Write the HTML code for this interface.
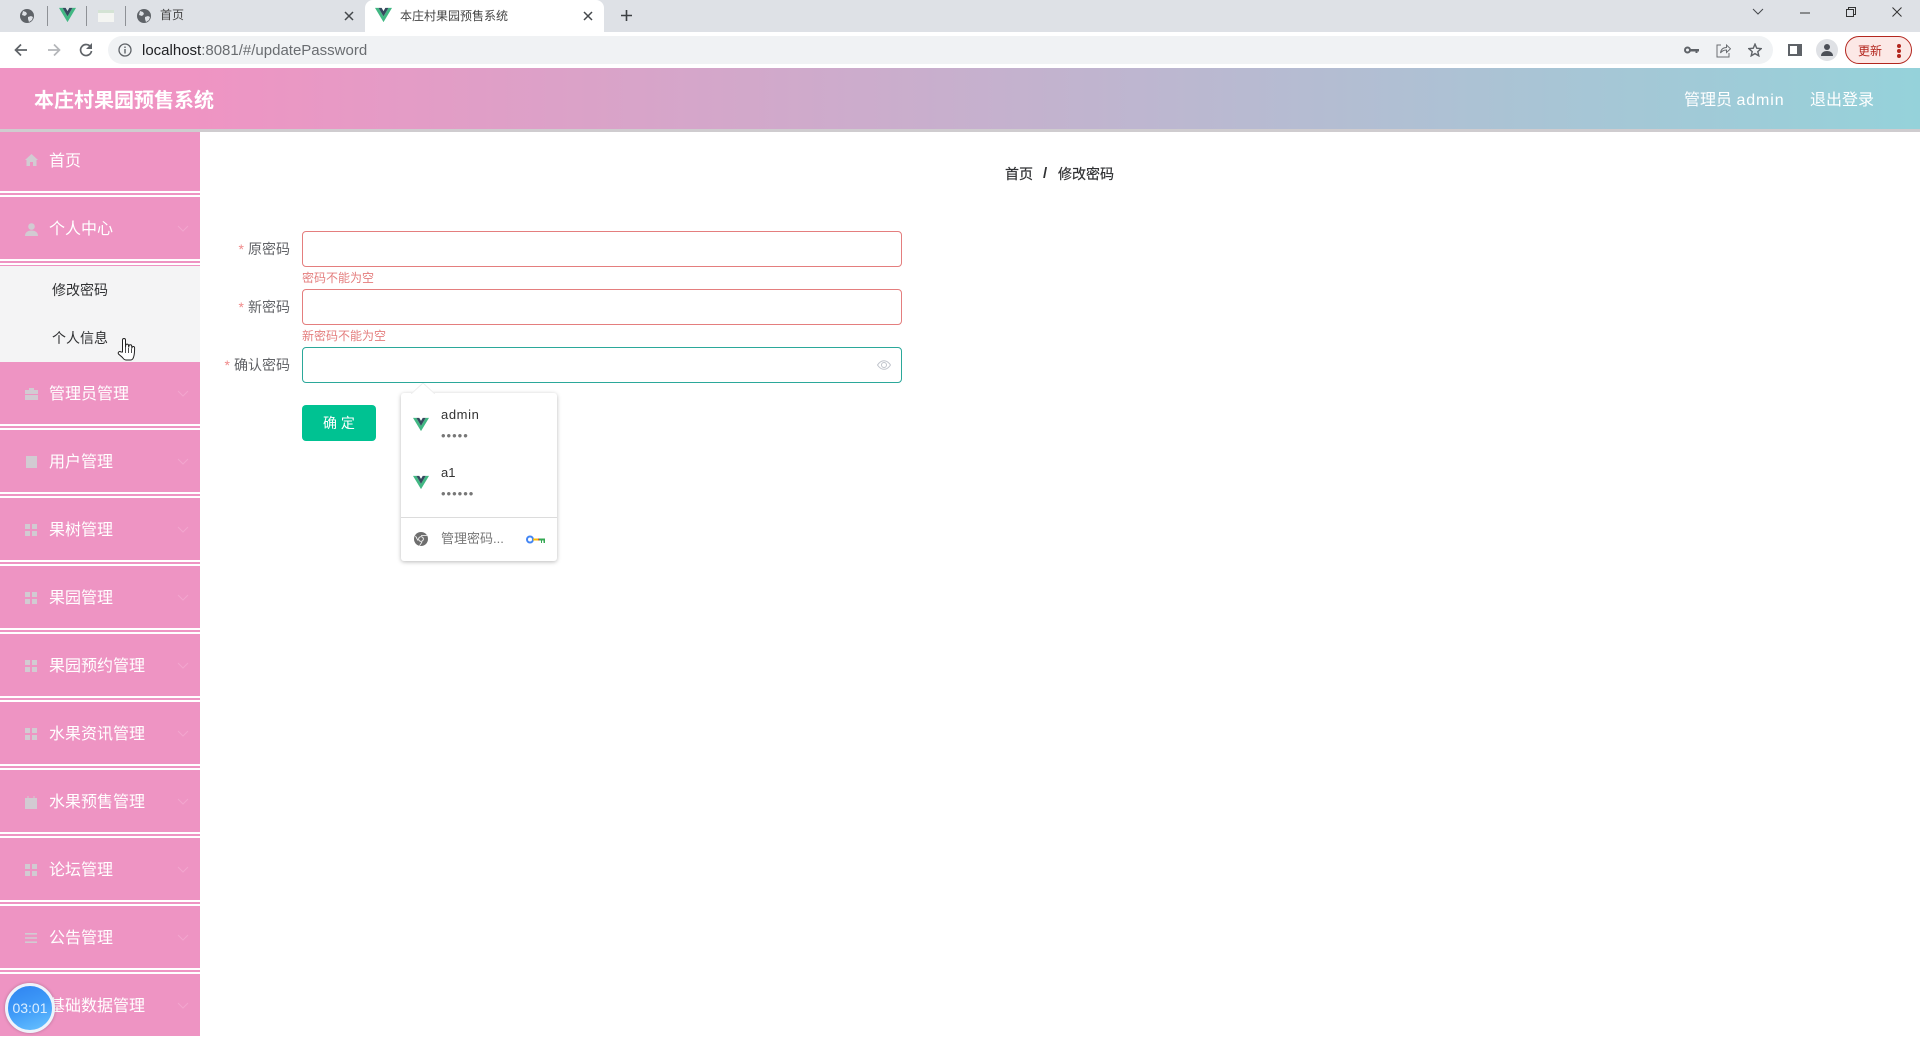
<!DOCTYPE html>
<html lang="zh"><head><meta charset="utf-8"><title>本庄村果园预售系统</title>
<style>
*{box-sizing:border-box}
html,body{margin:0;padding:0;width:1920px;height:1038px;overflow:hidden;background:#fff;font-family:"Liberation Sans","Noto Sans CJK SC",sans-serif}
.a{position:absolute;white-space:nowrap}
svg{position:absolute;display:block}
.t{position:absolute;white-space:nowrap;line-height:20px;height:20px}
.sep{position:absolute;top:6px;width:1px;height:20px;background:#8e9196}
.item{position:absolute;left:0;width:200px;height:68px;background:linear-gradient(#ee94c3 0 62px,#fff 62px 64px,#ee94c3 64px 66px,#fff 66px 68px)}
.item .l{position:absolute;left:49px;top:23px;font-size:16px;line-height:20px;color:#fff;white-space:nowrap}
.item svg.i{left:25px;top:26px}
.item svg.c{left:177px;top:28px}
.inp{position:absolute;left:302px;width:600px;height:36px;border:1px solid #e47e7e;border-radius:4px;background:#fff}
.lab{position:absolute;width:290px;left:0;text-align:right;font-size:14px;line-height:20px;color:#606266}
.lab b{font-weight:400;color:#f08a8a;margin-right:4px}
.err{position:absolute;left:302px;font-size:12px;line-height:14px;color:#e47e7e}
</style></head><body>

<!-- tab strip -->
<div class="a" style="left:0;top:0;width:1920px;height:32px;background:#dee1e6"></div>
<svg style="left:20px;top:9px" width="14" height="14" viewBox="0 0 14 14"><circle cx="7" cy="7" r="7" fill="#5f6368"/><path d="M3 2l3 1 1 2-2 2-3-1zM8 8l3-1 2 1-1 3-3 2-1-3z" fill="#dee1e6"/></svg>
<div class="sep" style="left:47px"></div>
<svg style="left:59px;top:7px" width="17" height="16" viewBox="0 0 24 22"><path d="M0 1L12 21 24 1h-5L12 13 5 1z" fill="#41b883"/><path d="M5 1l7 12 7-12h-4.400L12 5.600 9.400 1z" fill="#35495e"/></svg>
<div class="sep" style="left:86px"></div>
<div class="a" style="left:98px;top:10px;width:16px;height:12px;background:#f4f5f2;border-top:3px solid #d4e3d4"></div>
<div class="sep" style="left:125px"></div>
<svg style="left:137px;top:9px" width="14" height="14" viewBox="0 0 14 14"><circle cx="7" cy="7" r="7" fill="#5f6368"/><path d="M3 2l3 1 1 2-2 2-3-1zM8 8l3-1 2 1-1 3-3 2-1-3z" fill="#dee1e6"/></svg>
<div class="t" style="left:160px;top:5px;font-size:12px;color:#444">首页</div>
<svg style="left:344px;top:11px" width="10" height="10" viewBox="0 0 10 10"><path d="M1 1l8 8M9 1L1 9" stroke="#45484c" stroke-width="1.500"/></svg>
<div class="a" style="left:365px;top:0;width:239px;height:33px;background:#fff;border-radius:8px 8px 0 0"></div>
<svg style="left:375px;top:7px" width="17" height="16" viewBox="0 0 24 22"><path d="M0 1L12 21 24 1h-5L12 13 5 1z" fill="#41b883"/><path d="M5 1l7 12 7-12h-4.400L12 5.600 9.400 1z" fill="#35495e"/></svg>
<div class="t" style="left:400px;top:6px;font-size:12px;color:#444">本庄村果园预售系统</div>
<svg style="left:583px;top:11px" width="10" height="10" viewBox="0 0 10 10"><path d="M1 1l8 8M9 1L1 9" stroke="#45484c" stroke-width="1.500"/></svg>
<svg style="left:620px;top:9px" width="13" height="13" viewBox="0 0 13 13"><path d="M6.500 1v11M1 6.500h11" stroke="#3c4043" stroke-width="1.600"/></svg>
<svg style="left:1752px;top:8px" width="12" height="8" viewBox="0 0 12 8"><path d="M1 1l5 5 5-5" fill="none" stroke="#45484c" stroke-width="1"/></svg>
<svg style="left:1800px;top:12px" width="10" height="2" viewBox="0 0 10 2"><path d="M0 1h10" stroke="#333" stroke-width="1"/></svg>
<svg style="left:1846px;top:7px" width="10" height="10" viewBox="0 0 10 10"><path d="M.5 2.500h7v7h-7zM2.500 2.500v-2h7v7h-2" fill="none" stroke="#333" stroke-width="1"/></svg>
<svg style="left:1892px;top:7px" width="10" height="10" viewBox="0 0 10 10"><path d="M.5.5l9 9M9.500.5l-9 9" stroke="#333" stroke-width="1"/></svg>

<!-- toolbar -->
<div class="a" style="left:0;top:32px;width:1920px;height:36px;background:#fff"></div>
<svg style="left:14px;top:43px" width="14" height="14" viewBox="0 0 14 14"><path d="M13 7H2M7 1.500L1.500 7 7 12.500" fill="none" stroke="#5f6368" stroke-width="1.700"/></svg>
<svg style="left:47px;top:43px" width="14" height="14" viewBox="0 0 14 14"><path d="M1 7h11M7 1.500L12.500 7 7 12.500" fill="none" stroke="#b4b6b9" stroke-width="1.700"/></svg>
<svg style="left:79px;top:43px" width="14" height="14" viewBox="0 0 14 14"><path d="M11.800 4.200A5.500 5.500 0 1 0 12.500 8" fill="none" stroke="#5f6368" stroke-width="1.700"/><path d="M13 0v6H7z" fill="#5f6368"/></svg>
<div class="a" style="left:108px;top:36px;width:1665px;height:28px;background:#f0f2f4;border-radius:14px"></div>
<svg style="left:118px;top:43px" width="14" height="14" viewBox="0 0 14 14"><circle cx="7" cy="7" r="6" fill="none" stroke="#5f6368" stroke-width="1.300"/><path d="M7 6v4.500M7 3.500v1.500" stroke="#5f6368" stroke-width="1.400"/></svg>
<div class="t" style="left:142px;top:41px;font-size:15px;color:#6a6d71"><span style="color:#202124">localhost</span>:8081/#/updatePassword</div>
<svg style="left:1684px;top:46px" width="15" height="8" viewBox="0 0 15 8"><circle cx="3.500" cy="4" r="2.500" fill="none" stroke="#5f6368" stroke-width="2"/><path d="M6 3h9v2.500h-1.500V7h-2V5.500H6z" fill="#5f6368"/></svg>
<svg style="left:1716px;top:43px" width="15" height="15" viewBox="0 0 15 15"><path d="M5 2H1v12h12v-4" fill="none" stroke="#6b6e72" stroke-width="1"/><path d="M4.500 10c.5-4 3-5.500 6-5.500V2l4 3.800-4 3.700V7c-2.500 0-4.500.8-6 3z" fill="none" stroke="#6b6e72" stroke-width="1"/></svg>
<svg style="left:1748px;top:43px" width="14" height="14" viewBox="0 0 24 24"><path d="M12 2l3 7 7.500.7-5.700 5 1.700 7.300L12 18.200 5.500 22l1.700-7.300-5.700-5L9 9z" fill="none" stroke="#5f6368" stroke-width="2.400"/></svg>
<svg style="left:1788px;top:43px" width="14" height="14" viewBox="0 0 14 14"><path d="M0 1h14v12H0z" fill="#5f6368"/><path d="M2 3h7v8H2z" fill="#fff"/></svg>
<div class="a" style="left:1816px;top:39px;width:22px;height:22px;border-radius:50%;background:#dfe1e5"></div>
<svg style="left:1820px;top:43px" width="14" height="14" viewBox="0 0 14 14"><circle cx="7" cy="4" r="3" fill="#4b4f57"/><path d="M1 13c0-3.500 3-5 6-5s6 1.500 6 5z" fill="#4b4f57"/></svg>
<div class="a" style="left:1845px;top:36px;width:67px;height:28px;border-radius:14px;background:#fce8e6;border:1px solid #b3261e"></div>
<div class="t" style="left:1858px;top:41px;font-size:12px;color:#b3261e">更新</div>
<div class="a" style="left:1897px;top:44px;width:4px;height:4px;border-radius:50%;background:#b3261e;box-shadow:0 5px 0 #b3261e,0 10px 0 #b3261e"></div>

<!-- page header -->
<div class="a" style="left:0;top:68px;width:1920px;height:61px;background:linear-gradient(90deg,#ef94c3 10%,#95d2da 100%)"></div>
<div class="a" style="left:34px;top:89px;font-size:20px;line-height:24px;font-weight:700;color:#fff">本庄村果园预售系统</div>
<div class="a" style="left:1684px;top:91px;font-size:16px;line-height:20px;color:#fff">管理员 <span style="letter-spacing:.9px">admin</span></div>
<div class="a" style="left:1810px;top:91px;font-size:16px;line-height:20px;color:#fff">退出登录</div>

<!-- sidebar -->
<div class="item" style="top:129px"><div class="l">首页</div>
<svg class="i" style="top:25px" width="13" height="12" viewBox="0 0 13 12"><path d="M6.500 0L13 6h-1.500v6H8V8H5v4H1.500V6H0z" fill="#d2cbd2"/></svg></div>
<div class="item" style="top:197px"><div class="l">个人中心</div>
<svg class="i" width="13" height="13" viewBox="0 0 13 13"><circle cx="6.500" cy="3.500" r="3.300" fill="#d2cbd2"/><path d="M0 13c0-3.500 2.500-5.500 6.500-5.500S13 9.500 13 13z" fill="#d2cbd2"/></svg>
<svg class="c" width="12" height="7" viewBox="0 0 12 7"><path d="M1 1l5 5 5-5" fill="none" stroke="#f2a6ce" stroke-width="1"/></svg></div>
<div class="a" style="left:0;top:265px;width:200px;height:1px;background:#ee94c3"></div>
<div class="a" style="left:0;top:266px;width:200px;height:96px;background:#f4f4f5"></div>
<div class="a" style="left:52px;top:280px;font-size:14px;line-height:20px;color:#303133">修改密码</div>
<div class="a" style="left:52px;top:328px;font-size:14px;line-height:20px;color:#303133">个人信息</div>
<div class="item" style="top:362px"><div class="l">管理员管理</div>
<svg class="i" width="13" height="12" viewBox="0 0 13 12"><path d="M4 2V0h5v2h4v4H0V2zM0 7h13v5H0z" fill="#d2cbd2"/></svg>
<svg class="c" width="12" height="7" viewBox="0 0 12 7"><path d="M1 1l5 5 5-5" fill="none" stroke="#f2a6ce" stroke-width="1"/></svg></div>
<div class="item" style="top:430px"><div class="l">用户管理</div>
<svg class="i" width="13" height="12" viewBox="0 0 13 12"><path d="M1 0h11v12H1z" fill="#d2cbd2"/></svg>
<svg class="c" width="12" height="7" viewBox="0 0 12 7"><path d="M1 1l5 5 5-5" fill="none" stroke="#f2a6ce" stroke-width="1"/></svg></div>
<div class="item" style="top:498px"><div class="l">果树管理</div>
<svg class="i" width="12" height="12" viewBox="0 0 12 12"><path d="M0 0h5v5H0zM7 0h5v5H7zM0 7h5v5H0zM7 7h5v5H7z" fill="#d2cbd2"/></svg>
<svg class="c" width="12" height="7" viewBox="0 0 12 7"><path d="M1 1l5 5 5-5" fill="none" stroke="#f2a6ce" stroke-width="1"/></svg></div>
<div class="item" style="top:566px"><div class="l">果园管理</div>
<svg class="i" width="12" height="12" viewBox="0 0 12 12"><path d="M0 0h5v5H0zM7 0h5v5H7zM0 7h5v5H0zM7 7h5v5H7z" fill="#d2cbd2"/></svg>
<svg class="c" width="12" height="7" viewBox="0 0 12 7"><path d="M1 1l5 5 5-5" fill="none" stroke="#f2a6ce" stroke-width="1"/></svg></div>
<div class="item" style="top:634px"><div class="l">果园预约管理</div>
<svg class="i" width="12" height="12" viewBox="0 0 12 12"><path d="M0 0h5v5H0zM7 0h5v5H7zM0 7h5v5H0zM7 7h5v5H7z" fill="#d2cbd2"/></svg>
<svg class="c" width="12" height="7" viewBox="0 0 12 7"><path d="M1 1l5 5 5-5" fill="none" stroke="#f2a6ce" stroke-width="1"/></svg></div>
<div class="item" style="top:702px"><div class="l">水果资讯管理</div>
<svg class="i" width="12" height="12" viewBox="0 0 12 12"><path d="M0 0h5v5H0zM7 0h5v5H7zM0 7h5v5H0zM7 7h5v5H7z" fill="#d2cbd2"/></svg>
<svg class="c" width="12" height="7" viewBox="0 0 12 7"><path d="M1 1l5 5 5-5" fill="none" stroke="#f2a6ce" stroke-width="1"/></svg></div>
<div class="item" style="top:770px"><div class="l">水果预售管理</div>
<svg class="i" width="12" height="13" viewBox="0 0 12 13"><path d="M0 2h2.500V0h1v2h5V0h1v2H12v11H0z" fill="#d2cbd2"/></svg>
<svg class="c" width="12" height="7" viewBox="0 0 12 7"><path d="M1 1l5 5 5-5" fill="none" stroke="#f2a6ce" stroke-width="1"/></svg></div>
<div class="item" style="top:838px"><div class="l">论坛管理</div>
<svg class="i" width="12" height="12" viewBox="0 0 12 12"><path d="M0 0h5v5H0zM7 0h5v5H7zM0 7h5v5H0zM7 7h5v5H7z" fill="#d2cbd2"/></svg>
<svg class="c" width="12" height="7" viewBox="0 0 12 7"><path d="M1 1l5 5 5-5" fill="none" stroke="#f2a6ce" stroke-width="1"/></svg></div>
<div class="item" style="top:906px"><div class="l">公告管理</div>
<svg class="i" width="12" height="12" viewBox="0 0 12 12"><path d="M0 1h12v1.600H0zM0 5.200h12v1.600H0zM0 9.400h12V11H0z" fill="#d2cbd2"/></svg>
<svg class="c" width="12" height="7" viewBox="0 0 12 7"><path d="M1 1l5 5 5-5" fill="none" stroke="#f2a6ce" stroke-width="1"/></svg></div>
<div class="item" style="top:974px;height:62px"><div class="l">基础数据管理</div>
<svg class="c" width="12" height="7" viewBox="0 0 12 7"><path d="M1 1l5 5 5-5" fill="none" stroke="#f2a6ce" stroke-width="1"/></svg></div>
<div class="a" style="left:0;top:129px;width:1920px;height:3px;background:#cfcccf"></div>

<!-- breadcrumb -->
<div class="a" style="left:1005px;top:164px;font-size:14px;line-height:20px;color:#303133;-webkit-text-stroke:.2px #303133">首页</div>
<div class="a" style="left:1043px;top:164px;font-size:15px;line-height:20px;color:#303133;font-weight:700">/</div>
<div class="a" style="left:1058px;top:164px;font-size:14px;line-height:20px;color:#303133;-webkit-text-stroke:.2px #303133">修改密码</div>

<!-- form -->
<div class="lab" style="top:239px"><b>*</b>原密码</div>
<div class="inp" style="top:231px"></div>
<div class="err" style="top:271px">密码不能为空</div>
<div class="lab" style="top:297px"><b>*</b>新密码</div>
<div class="inp" style="top:289px"></div>
<div class="err" style="top:329px">新密码不能为空</div>
<div class="lab" style="top:355px"><b>*</b>确认密码</div>
<div class="inp" style="top:347px;border-color:#2ba89a"></div>
<svg style="left:877px;top:360px" width="14" height="10" viewBox="0 0 14 10"><path d="M.5 5C2.500 2 4.500.7 7 .7S11.500 2 13.500 5C11.500 8 9.500 9.300 7 9.300S2.500 8 .5 5z" fill="none" stroke="#c0c4cc" stroke-width="1"/><circle cx="7" cy="5" r="2.500" fill="none" stroke="#c0c4cc" stroke-width="1"/></svg>
<div class="a" style="left:302px;top:405px;width:74px;height:36px;border-radius:4px;background:#00c292;color:#fff;font-size:14px;line-height:36px;text-align:center">确 定</div>

<!-- password popup -->
<svg style="left:411px;top:383px;z-index:2" width="24" height="11" viewBox="0 0 24 11"><path d="M0 11L12 0l12 11z" fill="#fff"/><path d="M0 11L12 0l12 11" fill="none" stroke="#eee" stroke-width="1"/></svg>
<div class="a" style="left:401px;top:393px;width:156px;height:168px;background:#fff;border-radius:3px;box-shadow:0 1px 4px rgba(0,0,0,.28)"></div>
<svg style="left:413px;top:417px" width="16" height="15" viewBox="0 0 24 22"><path d="M0 1L12 21 24 1h-5L12 13 5 1z" fill="#41b883"/><path d="M5 1l7 12 7-12h-4.400L12 5.600 9.400 1z" fill="#35495e"/></svg>
<div class="a" style="left:441px;top:405px;font-size:13px;line-height:20px;letter-spacing:.6px;color:#333">admin</div>
<div class="a" style="left:441px;top:426px;font-size:13px;line-height:20px;letter-spacing:1px;color:#777">•••••</div>
<svg style="left:413px;top:475px" width="16" height="15" viewBox="0 0 24 22"><path d="M0 1L12 21 24 1h-5L12 13 5 1z" fill="#41b883"/><path d="M5 1l7 12 7-12h-4.400L12 5.600 9.400 1z" fill="#35495e"/></svg>
<div class="a" style="left:441px;top:463px;font-size:13px;line-height:20px;color:#333">a1</div>
<div class="a" style="left:441px;top:484px;font-size:13px;line-height:20px;letter-spacing:1px;color:#777">••••••</div>
<div class="a" style="left:401px;top:517px;width:156px;height:1px;background:#dcdcdc"></div>
<svg style="left:414px;top:532px" width="14" height="14" viewBox="0 0 14 14"><circle cx="7" cy="7" r="7" fill="#6e6e6e"/><circle cx="7" cy="7" r="2.800" fill="#fff"/><circle cx="7" cy="7" r="1.900" fill="#6e6e6e"/><path d="M7 3.500h6M4 8.500L1.500 4M8 10l-2.500 3.700" stroke="#fff" stroke-width=".8"/></svg>
<div class="a" style="left:441px;top:529px;font-size:13px;line-height:20px;color:#777">管理密码...</div>
<svg style="left:526px;top:535px" width="19" height="9" viewBox="0 0 19 9"><circle cx="4" cy="4.500" r="3" fill="none" stroke="#4285f4" stroke-width="2"/><path d="M7 3.500h5v2H7z" fill="#fbbc05"/><path d="M12 3.500h3v2h-3z" fill="#ea4335"/><path d="M13 3.500h6V8h-1.500V5.500H16V8h-1V5.500h-2z" fill="#34a853"/></svg>

<!-- hand cursor -->
<svg style="left:117px;top:337px" width="19" height="26" viewBox="0 0 19 26"><path d="M5.500 15V3a1.500 1.500 0 0 1 3 0v7l.2-1.500a1.400 1.400 0 0 1 2.800 0l.2 2 .2-1.400a1.400 1.400 0 0 1 2.800.2l.2 2 .2-.9c.3-1.400 2.500-1.200 2.500.5 0 4.500-.2 7-1 9.100-.5 1.800-1.500 3-3 3H9c-1.500 0-2.500-1-3.500-2.500L1.500 17c-1-1.800 1-3.300 2.500-2z" fill="#fff" stroke="#222" stroke-width="1"/><path d="M8.500 10v6M11.500 11v5M14.500 11.500V16" stroke="#222" stroke-width=".8"/></svg>

<!-- recording timer -->
<div class="a" style="left:5px;top:983px;width:50px;height:50px;border-radius:50%;border:3px solid #eef3fb;background:linear-gradient(160deg,#2f83f0 0%,#3f9bf8 50%,#69c3ff 100%);box-shadow:0 0 3px rgba(0,0,0,.25)"></div>
<div class="a" style="left:5px;top:998px;width:50px;text-align:center;font-size:14px;line-height:20px;color:#dbeeff">03:01</div>

</body></html>
